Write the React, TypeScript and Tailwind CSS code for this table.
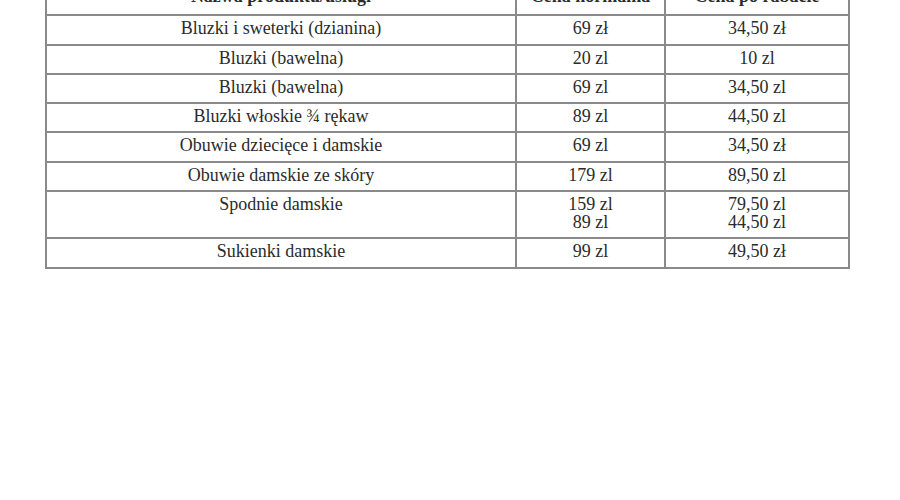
const rows: { name: string; normal: string[]; sale: string[] }[] = [
  { name: "Bluzki i sweterki (dzianina)", normal: ["69 zł"], sale: ["34,50 zł"] },
  { name: "Bluzki (bawelna)", normal: ["20 zl"], sale: ["10 zl"] },
  { name: "Bluzki (bawelna)", normal: ["69 zl"], sale: ["34,50 zl"] },
  { name: "Bluzki włoskie ¾ rękaw", normal: ["89 zl"], sale: ["44,50 zl"] },
  { name: "Obuwie dziecięce i damskie", normal: ["69 zl"], sale: ["34,50 zł"] },
  { name: "Obuwie damskie ze skóry", normal: ["179 zl"], sale: ["89,50 zl"] },
  { name: "Spodnie damskie", normal: ["159 zl", "89 zl"], sale: ["79,50 zl", "44,50 zl"] },
  { name: "Sukienki damskie", normal: ["99 zl"], sale: ["49,50 zł"] },
];

const cell = "border-2 border-[#8a8a8a] px-2 pt-[3px] pb-[6px] align-top text-center";
const head = "border-2 border-[#8a8a8a] px-2 pt-0 pb-[9px] align-top text-center";

export default function App() {
  return (
    <div className="h-[500px] w-[900px] overflow-hidden bg-white font-['Liberation_Serif',serif] text-[18px] leading-[18.25px] text-[#2b2b2b]">
      <table className="-mt-[15px] ml-[45px] w-[803px] table-fixed border-collapse">
        <colgroup>
          <col className="w-[470px]" />
          <col className="w-[149px]" />
          <col className="w-[184px]" />
        </colgroup>
        <thead>
          <tr>
            <th className={head}>Nazwa produktu/usługi</th>
            <th className={head}>Cena normalna</th>
            <th className={head}>Cena po rabacie</th>
          </tr>
        </thead>
        <tbody>
          {rows.map((row, i) => (
            <tr key={i}>
              <td className={cell}>{row.name}</td>
              <td className={cell}>
                {row.normal.map((v) => (
                  <div key={v}>{v}</div>
                ))}
              </td>
              <td className={cell}>
                {row.sale.map((v) => (
                  <div key={v}>{v}</div>
                ))}
              </td>
            </tr>
          ))}
        </tbody>
      </table>
    </div>
  );
}
